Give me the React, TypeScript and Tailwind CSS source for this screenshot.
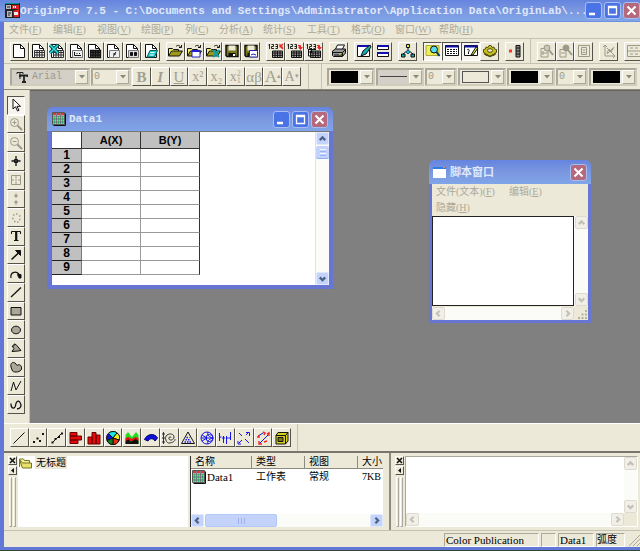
import React from 'react';

type Kids = { children?: React.ReactNode };

const raised = 'border border-t-white border-l-white border-r-[#55534a] border-b-[#55534a]';
const sunken = 'border border-t-[#55534a] border-l-[#55534a] border-r-white border-b-white';
const etched = 'border border-t-[#aca899] border-l-[#aca899] border-r-white border-b-white';

const Svg = ({ children }: Kids) => (
  <svg viewBox="0 0 16 16" className="size-4 shrink-0" fill="none" stroke="#111" aria-hidden="true">
    {children}
  </svg>
);

/* ---------- icons ---------- */

const Page = ({ children }: Kids) => (
  <Svg>
    <path d="M2.500 1.500h7l4 4v9h-11z" fill="#fff" />
    <path d="M9.500 1.500v4h4" />
    {children}
  </Svg>
);

const gridPath = 'M4.500 7.500h10v7h-10zM4.500 9.500h10M4.500 12h10M7 7.500v7M9.500 7.500v7M12 7.500v7';

const Folder = ({ children }: Kids) => (
  <Svg>
    <path d="M1.500 13V5.500h4l1 1h5V8" fill="#f0ec70" />
    <path d="M1.500 13l3-5h11l-3 5z" fill="#a09a18" />
    <path d="M9 3.500c2-2 4-1 4.500 1M12 4.500h2.500V2" />
    {children}
  </Svg>
);

const Disk = ({ children }: Kids) => (
  <Svg>
    <path d="M2 2.500h12v11H3l-1-1z" fill="#77761c" strokeWidth="1.500" />
    <path d="M4.500 2.500h7v5h-7z" fill="#ece9d8" stroke="none" />
    <path d="M4.500 10h7v4h-7z" fill="#111" stroke="none" />
    <path d="M9 11h2v2H9z" fill="#fff" stroke="none" />
    {children}
  </Svg>
);

const Import = ({ n = 1 }: { n?: number }) => (
  <Svg>
    <path d="M1.500 1v5M.5 2h1M3.500 1.500h2v2h-2v2H6M7.500 1.500h2v4h-2M7.500 3.500h2" strokeWidth=".9" />
    <path d="M4.500 8h10v6.500h-10zM4.500 10h10M4.500 12.300h10M7 8v6M9.500 8v6M12 8v6" fill="#aaa" />
    {n === 0 && <path d="M15 1l-3 3M12 1v3h3M12.500 3.500L15 6" stroke="#e22" strokeWidth="1.200" />}
    {n > 0 && <path d="M11 2.500h2.500v3M11.800 4.500h3.400l-1.700 2z" stroke="#e22" fill="#e22" />}
    {n > 1 && <path d="M2 6.500h8M2 9h3M2.500 6v7h3M5.500 6v4" />}
  </Svg>
);

const newIcons = [
  <Page />,
  <Page><path d={gridPath} fill="#eee" stroke="#333" /></Page>,
  <Page>
    <path d={gridPath} fill="#eee" stroke="#333" />
    <path d="M1 2l8 8M9 2l-8 8" stroke="#055" strokeWidth="3.500" />
    <path d="M1 2l8 8M9 2l-8 8" stroke="#3dd" strokeWidth="1.500" />
  </Page>,
  <Page><path d="M4.500 7.500h10v7h-10z" fill="#eee" stroke="#777" /><path d="M6.500 9v3.500h6.500M8.500 10.500h1M11 10.500h1" /></Page>,
  <Page><path d={gridPath} fill="#666" strokeWidth="1.300" /></Page>,
  <Page><path d="M4.500 7.500h10v7h-10z" fill="#eee" stroke="#777" /><path d="M8 13.500c2-1 1-3 3-4.500M8 11h3" /></Page>,
  <Page><path d="M4.500 7.500h10v7h-10z" fill="#ddd" stroke="#777" /><path d="M6.500 9.500h2v3h-2zM10.500 9.500h2v3h-2z" fill="#111" /></Page>,
  <Page><path d="M7 7.500h7.500l-3 6.500H4z" fill="#2cc" stroke="#066" /><path d="M7.500 9.500h4M6.800 12h4" stroke="#fff" /></Page>,
];

const openIcons = [
  <Folder />,
  <Folder><path d="M6 7.500h8v6.500H6z" fill="#fff" stroke="#22c" /><path d="M6 8h8" stroke="#22c" strokeWidth="2" /></Folder>,
  <Folder><path d="M8 7l6 7M14 7l-6 7" stroke="#08a0a0" strokeWidth="2" /></Folder>,
  <Disk />,
  <Disk><path d="M6.500 7.500h8v6.500h-8z" fill="#fff" stroke="#22a" /><path d="M8 12l2-1 3 1" stroke="#22a" /></Disk>,
];

const printIcon = (
  <Svg>
    <path d="M4.500 6l2-4h7l-2 4" fill="#fff" />
    <path d="M1.500 8l3-2h10v4l-3 3.500h-9l-1-1z" fill="#999" />
    <path d="M2 9.500h9.500l3-3M3 12h8M11.500 10v3" />
    <path d="M8 11h2" stroke="#ee3" />
  </Svg>
);

const viewIcons = [
  <Svg>
    <path d="M1.500 2.500h12v11h-12z" fill="#fff" />
    <path d="M1.500 3h12" stroke="#11a" strokeWidth="2" />
    <path d="M5 13l2-5 7-6 1 2-5 7z" fill="#1aa" />
  </Svg>,
  <Svg>
    <path d="M2.500 2.500h11v4h-11zM2.500 9.500h11v4h-11z" fill="#fff" />
    <path d="M2 3h12M2 10h12" stroke="#11a" strokeWidth="2" />
  </Svg>,
];

const treeIcon = (
  <Svg>
    <path d="M8 4v4M8 7l-5 4M8 7l5 4M8 7v4" />
    <path d="M6.500 1.500h3v3h-3z" fill="#ee3" />
    <path d="M1.500 11h3.500v3H1.500zM11 11h3.500v3H11z" fill="#1a9" />
    <path d="M6 9l2-2 2 2-2 2z" fill="#2bd" stroke="#068" />
  </Svg>
);

const paneIcons = [
  <Svg>
    <path d="M1 2.500h13v10H1z" fill="#ee5" stroke="#aa3" />
    <circle cx="9" cy="6.500" r="3.500" fill="#5de" />
    <path d="M11.500 9l3 4" strokeWidth="2" stroke="#036" />
  </Svg>,
  <Svg>
    <path d="M1.500 2.500h13v10h-13z" fill="#fff" />
    <path d="M1.500 3.500h13" stroke="#11a" strokeWidth="2" />
    <path d="M3 6.500h10M3 8.500h10M3 10.500h10" strokeDasharray="2 1" />
  </Svg>,
  <Svg>
    <path d="M1.500 2.500h13v10h-13z" fill="#fff" />
    <path d="M1.500 3.500h13" stroke="#11a" strokeWidth="2" />
    <path d="M4 7c2-1.500 3 0 1.500 2v2" />
    <path d="M8 12l5-8 2 1-5 7z" fill="#dd3" />
  </Svg>,
  <Svg>
    <path d="M1.500 6.500l2-.5.500-2 2 .5L7 2.500h2l1 2 2-.5.500 2 2 .5v3l-2 1-.5 2-2-.5-1 1.500H7l-1-1.500-2 .5-.5-2-2-1z" fill="#c5bd20" stroke="#55500c" />
    <path d="M2 10.500l3 1.500 3 1.500 3-1.500 3-1.500" stroke="#55500c" strokeWidth="1.500" />
    <ellipse cx="8" cy="7.500" rx="2.500" ry="1.800" fill="#ece9d8" stroke="#55500c" />
  </Svg>,
];

const addColumnIcon = (
  <Svg>
    <path d="M2 8h3" stroke="#f33" strokeWidth="3" />
    <path d="M9 2.500h4v11.500H9zM9 5h4M9 8h4M9 11h4" fill="#888" />
  </Svg>
);

const dim = '#9c998a';

const zoomGlyph = (inner: string) => (
  <Svg>
    <circle cx="6.500" cy="6.500" r="4" stroke={dim} />
    <path d="M9.500 9.500l4.500 4.500" stroke={dim} strokeWidth="2" />
    <path d={inner} stroke={dim} />
  </Svg>
);

const pageZoomIcons = [
  <Svg>
    <path d="M3 5.500h7V14H3zM5 8v4M3.500 10h6" stroke={dim} />
    <circle cx="9" cy="5" r="3" stroke={dim} fill="#c9c6b8" /><path d="M11 7l4 5" stroke={dim} strokeWidth="2" />
  </Svg>,
  <Svg>
    <path d="M3 6.500h6V14H3zM4 10h4" stroke={dim} />
    <circle cx="9" cy="5" r="3" stroke={dim} fill={dim} /><path d="M11 7l4 5" stroke={dim} strokeWidth="2" />
  </Svg>,
  <Svg><path d="M2.500 2.500h11v11h-11zM5.500 4.500h5v7h-5zM6.500 7h3M6.500 9.500h3" stroke={dim} /></Svg>,
];

const rescaleIcon = (
  <Svg><path d="M4 2v11h10M2 4l2-2 2 2M12 11l2 2-2 2M6 10l2-4 2 3 3-5M6 5l6 6M12 5l-6 6" stroke={dim} /></Svg>
);
const layerIcon = (
  <Svg><path d="M1.500 2.500h13v11h-13zM1.500 8h13M4 5h3M9 5h3M4 11h3M9 11h3" stroke={dim} /></Svg>
);

const toolIcons: [string, React.ReactNode][] = [
  ['Pointer', <Svg><path d="M5 2v10l2.500-2.300L9.500 14l1.500-.7-2-4h3.500z" fill="#fff" /></Svg>],
  ['Zoom in', zoomGlyph('M4.500 6.500h4M6.500 4.500v4')],
  ['Zoom out', zoomGlyph('M4.500 6.500h4')],
  ['Screen reader', <Svg><path d="M8 3v10M3.500 8h9" strokeWidth="1.300" /><path d="M6.500 6.500h3v3h-3z" fill="#333" /></Svg>],
  ['Data reader', <Svg><path d="M3.500 3.500h9v9h-9zM8 3.500v3M8 9.500v3M3.500 8h2.500M10 8h2.500M7 8h2" stroke={dim} /></Svg>],
  ['Data selector', <Svg><path d="M8 2v3M6.500 4.500h3L8 6.500zM8 14v-3M6.500 11.500h3L8 9.500z" stroke={dim} fill={dim} /></Svg>],
  ['Mask', <Svg><path d="M5 5h1.500M8 4h1.500M11 6h1.500M4 8.500h1.500M11 9.500h1.500M6 11.500h1.500M9 12h1.500" stroke={dim} strokeWidth="1.500" /></Svg>],
  ['Text', <Svg><path d="M3.500 6V3.500h9V6M6 12.500h4.500" /><path d="M8.200 3.500v9" strokeWidth="2.200" /></Svg>],
  ['Arrow', <Svg><path d="M3.500 12.500L11 5.500" strokeWidth="1.600" /><path d="M7.500 3.500h5v5z" fill="#111" /></Svg>],
  ['Curved arrow', <Svg><path d="M3 12c-1-5 4-8 8-4" strokeWidth="1.200" /><path d="M9.500 8.500h3.500v3.500h-2z" fill="#111" /></Svg>],
  ['Line', <Svg><path d="M3 13L13 3.500" strokeWidth="1.300" /></Svg>],
  ['Rectangle', <Svg><path d="M3 4.500h10v7.500H3z" fill="#aaa798" /></Svg>],
  ['Ellipse', <Svg><ellipse cx="8" cy="8" rx="4.500" ry="3.800" fill="#aaa798" /></Svg>],
  ['Polygon', <Svg><path d="M4 6h2V4l2 .5 5 6-3 .5-6 .5 2-3z" fill="#aaa798" /></Svg>],
  ['Region', <Svg><path d="M3 8c-1-4 2-5.500 4-4s1 3 3 2 4 1 3.500 4-7 4-9 2z" fill="#aaa798" /></Svg>],
  ['Polyline', <Svg><path d="M3 13l2.500-9L8 12l5-9" /></Svg>],
  ['Freehand', <Svg><path d="M3 6.500c0 6 4 5.500 4.500 2S10 2.500 12 5.500s1 6-3 6.500" strokeWidth="1.300" /></Svg>],
];

const blue = '#1717ea';

const plotIcons: [string, React.ReactNode][] = [
  ['Line plot', <Svg><path d="M2.500 13.500l11-11" /></Svg>],
  ['Scatter plot', <Svg><path d="M3 12h2M6.500 8.500h2M9 11h2M12 4h2" strokeWidth="2" /></Svg>],
  ['Line and symbol plot', <Svg><path d="M3 13L13 3" /><path d="M2.500 12.500h2M5.500 9h2M9 7h2M12 3.500h2" strokeWidth="2" /></Svg>],
  ['Bar chart', <Svg><path d="M2 2.500h7v3.500H2zM2 6h11.500v4H2zM2 10h8v3.500H2z" fill="#e80808" stroke="#600" /></Svg>],
  ['Column chart', <Svg><path d="M2 7h4v7H2zM6 2.500h4V14H6zM10 5h4v9h-4z" fill="#e80808" stroke="#600" /></Svg>],
  ['Pie chart', (
    <Svg>
      <circle cx="8" cy="8" r="6.500" fill="#1010cc" />
      <path d="M8 8L3.500 3.500C6 1 10 1 12 3z" fill="#1de8e8" />
      <path d="M8 8l4-5c3 2 3 5 2 7z" fill="#f2ee20" />
      <path d="M8 8l6 2c-1 3-3 4.500-6 4.500z" fill="#ee2a10" />
      <path d="M8 8v6.500c-3 0-5-1.500-6-4z" fill="#0a8020" />
    </Svg>
  )],
  ['Area chart', (
    <Svg>
      <path d="M1.500 14V5L4 2l3 4 1 1 4-5 2.500 3v9z" fill="#1ce01c" stroke="none" />
      <path d="M1.500 8l3-1 3 2 4-2 3 1v3h-13z" fill="#e81010" stroke="none" />
      <path d="M1.500 14v-3l3-1.500 2 2 3-1 2-1.500 3 2V14z" fill="#111" stroke="none" />
    </Svg>
  )],
  ['Ribbon', <Svg><path d="M1.500 9.500C4 3.500 12 3 14.500 8l-2.500 3c-2-3-5-3-7 0z" fill="#1010dd" stroke="#00066e" /></Svg>],
  ['Polar', <Svg><path d="M2.500 2v12M1 4h3M1 8h3M1 12h3M10 8c0-2-3-1-2 1s5 1 5-2-4-4-7-2-1 9 3 8 5-2 5-4" stroke="#333" /></Svg>],
  ['Ternary', <Svg><path d="M8 2l6.500 11.500h-13z" /><path d="M6.500 7.500h3M5.500 9.800h5M4.500 12h7" stroke={blue} strokeDasharray="1.500 1" strokeWidth="1.500" /></Svg>],
  ['Smith chart', <Svg><g stroke={blue}><circle cx="8" cy="8" r="6" /><circle cx="10.500" cy="8" r="3.500" /><path d="M2 8h12M9 2c-1 3 1 5 5 6M9 14c-1-3 1-5 5-6M3 5l5 3-5 3" /></g></Svg>],
  ['High-low-close', <Svg><path d="M2.500 3v8M2.500 7h2M6.500 6v7M5 8h3M9.500 6v8M9.500 8h2M13.500 2v8M11.500 8h2" stroke={blue} /></Svg>],
  ['Vector', <Svg><path d="M3 13l3-3M5 14H2v-3M3 3l3 3M9 9l4 4M13.500 6V2.500H10M10 5l3-3" stroke={blue} /></Svg>],
  ['Vector XYXY', <Svg><path d="M3 6l5-3M5 13l8-8" stroke={blue} /><path d="M2 7h2v-2M8 2l2 1-1 2M4 11v3h3M12 4l2-1v3M9 12l3-1" stroke="#e22" strokeWidth="1.400" /></Svg>],
  ['Template library', <Svg><path d="M2 5.500l2-3h10v8.500l-2.500 3H2z" fill="#d8d020" /><path d="M2 5.500h9.500V14M11.500 5.500l2.500-3" /><path d="M4 7.500h5v4H4z" fill="#77761c" /></Svg>],
];

const SheetIcon = () => (
  <Svg>
    <path d="M1.500 1.500h12v12h-12z" fill="#ddd" stroke="#555" />
    <path d="M2 3h11" stroke="#e33" strokeWidth="2" strokeDasharray="3 1" />
    <path d="M3.500 5v8M7.500 5v8M11.500 5v8" stroke="#3fc070" strokeWidth="2" />
    <path d="M2 5h11M2 8h11M2 11h11M5.500 2v11M9.500 2v11" stroke="#556" strokeWidth=".7" />
    <path d="M14.500 2.500v12h-12" />
  </Svg>
);

/* ---------- controls ---------- */

function ToolButton({ label, pressed, children }: { label: string; pressed?: boolean } & Kids) {
  return (
    <button
      type="button"
      aria-label={label}
      className={`flex h-full min-w-0 flex-1 items-center justify-center overflow-hidden ${pressed ? `${sunken} bg-[#f6f4ec]` : `${raised} bg-[#ece9d8]`}`}
    >
      {children}
    </button>
  );
}

const Group = ({ w, children }: { w: string } & Kids) => <div className={`flex h-[19px] shrink-0 ${w}`}>{children}</div>;

const Divider = () => <div className="h-full w-px shrink-0 bg-[#c5c2b2]" />;

function Combo({ label, w, value, preview, gray }: { label: string; w: string; value?: string; preview?: React.ReactNode; gray?: boolean }) {
  return (
    <div className={`relative h-[18px] shrink-0 border-2 border-t-[#aca899] border-l-[#aca899] border-r-[#d0cdbd] border-b-[#d0cdbd] ${w} ${gray ? 'bg-[#d4d0c8]' : 'bg-[#ece9d8]'}`}>
      <select
        disabled
        aria-label={label}
        className={`block h-[14px] w-full appearance-none font-['Liberation_Mono',monospace] text-[10px] leading-[14px] text-[#9c998a] ${gray ? 'pl-5' : 'pl-px'}`}
      >
        <option>{value}</option>
      </select>
      {preview}
      <span className="pointer-events-none absolute inset-y-0 right-0 flex w-[13px] items-center justify-center border border-t-white border-l-white border-r-[#aca899] border-b-[#aca899] bg-[#ece9d8]">
        <svg viewBox="0 0 6 4" className="h-1 w-1.5" fill="#8c897a"><path d="M0 0h6L3 3.500z" /></svg>
      </span>
    </div>
  );
}

const swatch = 'pointer-events-none absolute left-0.5 top-px h-3 w-[27px]';

function CaptionButton({ kind }: { kind: 'min' | 'max' | 'close' }) {
  return (
    <button
      type="button"
      aria-label={kind}
      className={`flex size-[17px] shrink-0 items-center justify-center rounded-[3px] border border-[#a9bef0] ${kind === 'close' ? 'bg-[#b5697c]' : 'bg-[#4a74e6]'}`}
    >
      <svg viewBox="0 0 15 15" className="size-[15px]" fill="none" stroke="#fff" strokeWidth="2">
        {kind === 'min' && <path d="M3 11h6" strokeWidth="2.500" />}
        {kind === 'max' && <path d="M3.500 3.500h8v8h-8zM3 4.500h9" strokeWidth="1.300" />}
        {kind === 'close' && <path d="M3.500 3.500l8 8M11.500 3.500l-8 8" />}
      </svg>
    </button>
  );
}

const chevrons = {
  up: 'M2.500 6.500L5 4l2.500 2.500',
  down: 'M2.500 4L5 6.500 7.500 4',
  left: 'M6 2.500L3.500 5 6 7.500',
  right: 'M4 2.500L6.500 5 4 7.500',
};

function ScrollButton({ dir, active }: { dir: keyof typeof chevrons; active?: boolean }) {
  return (
    <button
      type="button"
      aria-label={`Scroll ${dir}`}
      className={`flex size-[13px] shrink-0 items-center justify-center rounded-[2px] border ${active ? 'border-[#dfe8fd] bg-[#c3d3fb]' : 'border-[#dddbd0] bg-[#f1efe8]'}`}
    >
      <svg viewBox="0 0 10 10" className="size-[11px]" fill="none" stroke={active ? '#4d6185' : '#c4c2b8'} strokeWidth="2">
        <path d={chevrons[dir]} />
      </svg>
    </button>
  );
}

const MenuItem = ({ text, hot }: { text: string; hot: string }) => (
  <button type="button" className="shrink-0 whitespace-nowrap text-[#aca899]">
    {text}(<u>{hot}</u>)
  </button>
);

const DockGrip = () => (
  <div className="flex w-[10px] shrink-0 flex-col items-center gap-px">
    <button type="button" aria-label="Close pane" className={`flex size-[9px] items-center justify-center ${raised}`}>
      <svg viewBox="0 0 7 7" className="size-[7px]" stroke="#111" strokeWidth="1.500"><path d="M1 1l5 5M6 1L1 6" /></svg>
    </button>
    <button type="button" aria-label="Collapse pane" className={`flex size-[9px] items-center justify-center ${raised}`}>
      <svg viewBox="0 0 7 7" className="size-[7px]" fill="#111"><path d="M5 1v5L2 3.500z" /></svg>
    </button>
    <div className="flex flex-1 gap-px pt-px">
      <span className="w-[3px] border border-t-white border-l-white border-r-[#aca899] border-b-[#aca899]" />
      <span className="w-[3px] border border-t-white border-l-white border-r-[#aca899] border-b-[#aca899]" />
    </div>
  </div>
);

/* ---------- child windows ---------- */

const caption = 'bg-linear-to-b from-[#6584df] via-[#7b97df] to-[#80a5e9]';

function DataWindow() {
  return (
    <section className="absolute left-[17px] top-4 flex h-[182px] w-[286px] flex-col rounded-t-md border-4 border-t-0 border-[#6876d3] bg-[#6876d3]">
      <header className={`-mx-1 flex h-6 shrink-0 items-center gap-0.5 rounded-t-md px-1 ${caption}`}>
        <SheetIcon />
        <h2 className="flex-1 font-['Liberation_Mono',monospace] text-[11px] font-bold text-[#dfe8fb]">Data1</h2>
        <div className="flex gap-0.5 pr-px">
          <CaptionButton kind="min" />
          <CaptionButton kind="max" />
          <CaptionButton kind="close" />
        </div>
      </header>
      <div className="flex min-h-0 flex-1 border-l border-t border-[#77756c] bg-white">
        <div className="flex-1">
          <table className="w-[148px] table-fixed border-separate border-spacing-0 font-['Liberation_Sans',sans-serif] text-[12px] font-bold leading-[13px]">
            <thead>
              <tr className="h-[17px]">
                <td className="w-[30px] border-b border-r border-[#333]" />
                <th className="border-b border-r border-[#333] bg-[#c0c0c0] p-0 text-[11px]">A(X)</th>
                <th className="border-b border-r border-[#333] bg-[#c0c0c0] p-0 text-[11px]">B(Y)</th>
              </tr>
            </thead>
            <tbody>
              {[1, 2, 3, 4, 5, 6, 7, 8, 9].map((n) => (
                <tr key={n} className="h-[14px]">
                  <th className="border-b border-r border-b-[#222] border-r-[#777] bg-[#c0c0c0] p-0">{n}</th>
                  <td className="border-b border-r border-[#999] p-0" />
                  <td className="border-b border-r border-b-[#999] border-r-[#333] p-0" />
                </tr>
              ))}
            </tbody>
          </table>
        </div>
        <div className="flex w-[14px] flex-col items-center border-l border-[#e5e3d8] bg-[#fbfbf7]">
          <ScrollButton dir="up" active />
          <div className="mt-px flex h-[13px] w-[13px] flex-col items-center justify-center gap-px rounded-[2px] border-b border-[#8fb0ee] bg-[#c3d3fb]">
            <span className="h-px w-1.5 bg-[#eef3ff]" />
            <span className="h-px w-1.5 bg-[#9ab2ee]" />
            <span className="h-px w-1.5 bg-[#eef3ff]" />
            <span className="h-px w-1.5 bg-[#9ab2ee]" />
          </div>
          <div className="flex-1" />
          <ScrollButton dir="down" active />
        </div>
      </div>
    </section>
  );
}

function ScriptWindow() {
  return (
    <section className="absolute left-[399px] top-[69px] flex h-[163px] w-[162px] flex-col rounded-t-md border-[3px] border-t-0 border-[#6876d3] bg-[#ece9d8]">
      <header className={`-mx-[3px] flex h-6 shrink-0 items-center gap-1 rounded-t-md px-1 ${caption}`}>
        <svg viewBox="0 0 13 11" className="h-[11px] w-[13px]"><path d="M0 0h13v11H0z" fill="#fff" /><path d="M0 0h13v2H0z" fill="#2b7de0" /><path d="M10 0h2v1h-2z" fill="#e84" /></svg>
        <h2 className="flex-1 text-[11px] font-bold text-[#dfe8fb]">脚本窗口</h2>
        <CaptionButton kind="close" />
      </header>
      <nav className="flex h-8 shrink-0 flex-wrap gap-x-[14px] pl-1 pr-8 text-[10px] leading-4">
        <MenuItem text="文件(文本)" hot="F" />
        <MenuItem text="编辑" hot="E" />
        <MenuItem text="隐藏" hot="H" />
      </nav>
      <div className="flex min-h-0 flex-1">
        <textarea aria-label="脚本窗口" className="min-w-0 flex-1 resize-none border border-[#222] bg-white outline-none" />
        <div className="flex w-[14px] flex-col items-center justify-between bg-[#fbfbf7]">
          <ScrollButton dir="up" />
          <ScrollButton dir="down" />
        </div>
      </div>
      <div className="flex h-[14px] items-center">
        <div className="flex flex-1 items-center justify-between bg-[#fbfbf7]">
          <ScrollButton dir="left" />
          <ScrollButton dir="right" />
        </div>
        <svg viewBox="0 0 14 14" className="size-[14px]" stroke="#b5b2a2" strokeWidth="2" strokeDasharray="2 1.500">
          <path d="M12 4v9M8.500 7.500V13M5 11v2" />
        </svg>
      </div>
    </section>
  );
}

/* ---------- page ---------- */

const menus = [
  ['文件', 'F'], ['编辑', 'E'], ['视图', 'V'], ['绘图', 'P'], ['列', 'C'], ['分析', 'A'],
  ['统计', 'S'], ['工具', 'T'], ['格式', 'O'], ['窗口', 'W'], ['帮助', 'H'],
];

const formats: [string, React.ReactNode][] = [
  ['Bold', <b>B</b>],
  ['Italic', <i className="font-bold">I</i>],
  ['Underline', <u>U</u>],
  ['Superscript', <span className="text-[14px]">x²</span>],
  ['Subscript', <span className="text-[14px]">x₂</span>],
  ['Super and subscript', (
    <span className="flex items-center text-[14px]">x<span className="flex flex-col text-[8px] leading-[7px]"><span>2</span><span>1</span></span></span>
  )],
  ['Greek', <span className="text-[15px]">αβ</span>],
  ['Larger', <span className="text-[17px]">A<sup className="text-[7px]">▴</sup></span>],
  ['Smaller', <span className="text-[14px]">A<sup className="text-[7px]">▾</sup></span>],
];

export default function App() {
  return (
    <div className="flex min-h-screen flex-col overflow-hidden border-b border-[#33452c] bg-[#ece9d8] font-['Liberation_Serif','Noto_Sans_CJK_SC',serif] text-black">
      <header className={`flex h-[22px] shrink-0 items-center border-b border-[#6f8fe0] pl-[5px] ${caption}`}>
        <svg viewBox="0 0 15 15" className="size-[15px] shrink-0">
          <path d="M0 0h15v15H0z" fill="#222" />
          <path d="M0 0h14v1H0z" fill="#099" />
          <path d="M1 2h5v4H1zM2 8h5v6H2z" fill="#bbb" />
          <path d="M7 2h7v4H7zM8 8l6-2v8H9z" fill="#d22" />
          <path d="M8 3h3v2H8zM9 9h4v3H9z" fill="#eee" />
          <path d="M2 4h3M3 10h3M3 12h2M9 4h1" stroke="#222" />
        </svg>
        <h1 className="min-w-0 flex-1 whitespace-nowrap pt-px font-['Liberation_Mono',monospace] text-[11px] font-bold text-[#dfe8fb]">
          OriginPro 7.5 - C:\Documents and Settings\Administrator\Application Data\OriginLab\...
        </h1>
        <div className="flex gap-0.5">
          <CaptionButton kind="min" />
          <CaptionButton kind="max" />
          <CaptionButton kind="close" />
        </div>
      </header>

      <div className="flex flex-1 flex-col border-b-[3px] border-l-4 border-[#6277d8]">
        <nav className="flex h-4 shrink-0 gap-[9px] pl-[5px] text-[10px] leading-4">
          {menus.map(([text, hot]) => (
            <div key={text} className={text === '列' ? 'w-[25px]' : 'w-[35px]'}>
              <MenuItem text={text} hot={hot} />
            </div>
          ))}
        </nav>

        <div className="flex h-[26px] shrink-0 items-center gap-1.5 border-y border-t-[#c5c2b2] border-b-[#c5c2b2] pl-1.5">
          <Group w="w-[150px]">{newIcons.map((icon, i) => <ToolButton key={i} label={`New ${i + 1}`}>{icon}</ToolButton>)}</Group>
          <Group w="w-[94px]">{openIcons.map((icon, i) => <ToolButton key={i} label={`File ${i + 1}`}>{icon}</ToolButton>)}</Group>
          <Group w="w-[57px]">{[0, 1, 2].map((n) => <ToolButton key={n} label={`Import ${n + 1}`}><Import n={n} /></ToolButton>)}</Group>
          <Group w="w-[19px]"><ToolButton label="Print">{printIcon}</ToolButton></Group>
          <Group w="w-[38px]">{viewIcons.map((icon, i) => <ToolButton key={i} label={`View ${i + 1}`}>{icon}</ToolButton>)}</Group>
          <Group w="w-[19px]"><ToolButton label="Custom routine">{treeIcon}</ToolButton></Group>
          <Group w="w-[76px]">{paneIcons.map((icon, i) => <ToolButton key={i} label={`Pane ${i + 1}`} pressed={i < 3}>{icon}</ToolButton>)}</Group>
          <Group w="w-[19px]"><ToolButton label="Add column">{addColumnIcon}</ToolButton></Group>
          <Divider />
          <Group w="w-[56px]">{pageZoomIcons.map((icon, i) => <ToolButton key={i} label={`Page zoom ${i + 1}`}>{icon}</ToolButton>)}</Group>
          <Group w="w-[19px]"><ToolButton label="Rescale">{rescaleIcon}</ToolButton></Group>
          <Group w="w-[19px]"><ToolButton label="Layers">{layerIcon}</ToolButton></Group>
        </div>

        <div className="flex h-[26px] shrink-0 items-center gap-px border-b border-[#8d8b80] pl-1.5">
          <Combo
            label="Font"
            w="w-[80px]"
            value="Arial"
            gray
            preview={(
              <svg viewBox="0 0 12 12" className="pointer-events-none absolute left-1 top-px size-3" fill="none" stroke="#222">
                <path d="M1 3V1.500h6V3M4 1.500V8" /><path d="M4 6V4.500h7.500V6M8 4.500V11M6 11h4" strokeWidth="1.800" />
              </svg>
            )}
          />
          <Combo label="Font size" w="w-[40px]" value="0" />
          <Group w="w-[169px]">
            {formats.map(([label, glyph]) => (
              <ToolButton key={label} label={label}><span className="text-[15px] leading-4 text-[#a3a091]">{glyph}</span></ToolButton>
            ))}
          </Group>
          <div className="flex h-full w-[24px] shrink-0 justify-between pl-1.5 pr-1"><Divider /><Divider /></div>
          <Combo label="Line colour" w="w-[48px]" preview={<span className={`${swatch} bg-black`} />} />
          <Combo label="Line style" w="w-[48px]" gray preview={<span className="pointer-events-none absolute left-0.5 top-1.5 h-px w-[27px] bg-[#444]" />} />
          <Combo label="Line width" w="w-[32px]" value="0" />
          <Combo label="Fill" w="w-[48px]" preview={<span className={`${swatch} border border-[#555]`} />} />
          <Combo label="Fill colour" w="w-[48px]" preview={<span className={`${swatch} bg-black`} />} />
          <Combo label="Pattern width" w="w-[32px]" value="0" />
          <Combo label="Pattern colour" w="w-[48px]" preview={<span className={`${swatch} bg-black`} />} />
        </div>

        <main className="flex flex-1">
          <aside className="w-[26px] shrink-0 border-r border-[#c5c2b2] pl-[3px] pt-1.5">
            <div className="flex h-[318px] w-[18px] flex-col">
              {toolIcons.map(([label, icon], i) => (
                <div key={label} className="flex min-h-0 flex-1"><ToolButton label={label} pressed={i === 0}>{icon}</ToolButton></div>
              ))}
            </div>
          </aside>
          <div className="relative min-h-[331px] flex-1 border-t border-[#66645c] bg-[#808080]">
            <DataWindow />
            <ScriptWindow />
          </div>
        </main>

        <div className="flex h-[30px] shrink-0 items-center border-b-2 border-t border-b-[#77756c] border-t-white pl-1.5">
          <div className="flex h-full items-center border-r border-[#c5c2b2] pr-1.5">
            <Group w="w-[281px]">{plotIcons.map(([label, icon]) => <ToolButton key={label} label={label}>{icon}</ToolButton>)}</Group>
          </div>
        </div>

        <div className="flex h-[78px] shrink-0 border-b border-[#c5c2b2] py-[3px] pl-[3px] pr-0.5 text-[10px]">
          <DockGrip />
          <div className="ml-px w-[170px] shrink-0 bg-white">
            <div className="flex h-[13px] items-center">
              <svg viewBox="0 0 14 12" className="h-3 w-[15px]" stroke="#77751c">
                <path d="M1 10V2h4l1 1.500h5V6" fill="#f5f09a" /><path d="M1 2.500L4 6h9v5H4z" fill="#e8e070" />
              </svg>
              <span className="ml-0.5 bg-[#ece9d8] px-px text-[10px] leading-[13px]">无标题</span>
            </div>
          </div>
          <div className="ml-0.5 flex w-[193px] shrink-0 flex-col border-l border-[#333] bg-white">
            <table className="w-full table-fixed border-separate border-spacing-0 text-left leading-[12px]">
              <thead>
                <tr className="bg-[#ece9d8]">
                  <th className="w-[61px] border-b border-r border-[#8d8b80] py-0 pl-1 font-normal">名称</th>
                  <th className="w-[53px] border-b border-r border-[#8d8b80] py-0 pl-1 font-normal">类型</th>
                  <th className="w-[53px] border-b border-r border-[#8d8b80] py-0 pl-1 font-normal">视图</th>
                  <th className="border-b border-[#8d8b80] py-0 pl-1 font-normal">大小</th>
                </tr>
              </thead>
              <tbody>
                <tr>
                  <td className="p-0"><span className="flex items-center text-[11px]"><SheetIcon />Data1</span></td>
                  <td className="py-0 pl-1">工作表</td>
                  <td className="py-0 pl-1">常规</td>
                  <td className="py-0 pl-1">7KB</td>
                </tr>
              </tbody>
            </table>
            <div className="mt-auto flex h-[13px] bg-[#fbfbf7]">
              <ScrollButton dir="left" active />
              <div className="ml-px flex w-[72px] items-center justify-center gap-0.5 rounded-[2px] border border-[#b3c8f7] bg-[#c3d3fb]">
                <span className="h-1.5 w-px bg-[#9ab2ee]" />
                <span className="h-1.5 w-px bg-[#9ab2ee]" />
                <span className="h-1.5 w-px bg-[#9ab2ee]" />
              </div>
              <div className="flex-1" />
              <ScrollButton dir="right" active />
            </div>
          </div>
          <div className="-my-[3px] ml-1.5 mr-[3px] w-0.5 shrink-0 bg-[#8d8b80]" />
          <DockGrip />
          <div className={`ml-px flex min-w-0 flex-1 flex-col ${etched}`}>
            <div className="flex min-h-0 flex-1">
              <textarea aria-label="Results log" className="min-w-0 flex-1 resize-none bg-white outline-none" />
              <div className="flex w-[13px] flex-col justify-between bg-[#fbfbf7]">
                <ScrollButton dir="up" />
                <ScrollButton dir="down" />
              </div>
            </div>
            <div className="flex h-[13px]">
              <div className="flex flex-1 justify-between bg-[#fbfbf7]">
                <ScrollButton dir="left" />
                <ScrollButton dir="right" />
              </div>
              <div className="w-[13px]" />
            </div>
          </div>
        </div>

        <footer className="flex h-4 shrink-0 items-center justify-end gap-0.5 pt-0.5 text-[11px] leading-3">
          <span className={`h-full w-[95px] pl-px ${etched}`}>Color Publication</span>
          <span className={`h-full w-[15px] ${etched}`} />
          <span className={`h-full w-[36px] pl-px ${etched}`}>Data1</span>
          <span className={`h-full w-[29px] text-[10px] ${etched}`}>弧度</span>
          <svg viewBox="0 0 12 12" className="ml-px size-3" stroke="#aca899"><path d="M1 12L12 1M5 12l7-7M9 12l3-3" /></svg>
        </footer>
      </div>
    </div>
  );
}
